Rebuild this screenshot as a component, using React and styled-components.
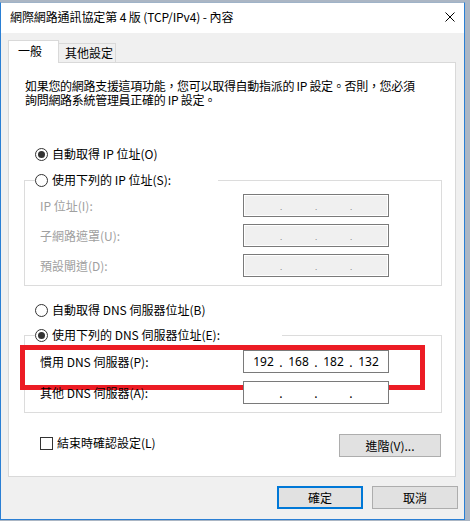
import React from "react";
import styled, { createGlobalStyle } from "styled-components";

const Global = createGlobalStyle`
  html, body { margin: 0; padding: 0; }
  body {
    background: #abb6c4;
    width: 470px;
    height: 521px;
    overflow: hidden;
    font-family: "Noto Sans CJK TC", "Noto Sans", sans-serif;
    font-size: 12px;
    color: #000;
  }
  * { box-sizing: border-box; }
`;

const Window = styled.div`
  margin-top: 2px;
  width: 465px;
  height: 518px;
  border: 1px solid #2a7fd4;
  border-top-color: #9fb3c8;
  background: #f0f0f0;
  display: flex;
  flex-direction: column;
`;

const TitleBar = styled.div`
  height: 30px;
  background: #fff;
  display: flex;
  align-items: center;
  justify-content: space-between;
  padding: 0 9px 2px 9px;
`;

const Title = styled.div`
  font-size: 12px;
  line-height: 14px;
  white-space: nowrap;
  letter-spacing: -0.1px;
`;

const CloseIcon = styled.svg`
  width: 10px;
  height: 10px;
`;

const Body = styled.div`
  flex: 1;
  display: flex;
  flex-direction: column;
  padding: 7px 6px 9px 7px;
`;

const TabRow = styled.div`
  display: flex;
  align-items: flex-end;
  height: 22px;
  position: relative;
  z-index: 1;
`;

const Tab = styled.div`
  height: ${(p) => (p.$active ? "23px" : "19px")};
  margin-bottom: ${(p) => (p.$active ? "-1px" : "0")};
  padding: ${(p) => (p.$active ? "0 9px 2px 9px" : "0 6px 1px 6px")};
  width: ${(p) => p.$w}px;
  background: ${(p) => (p.$active ? "#fff" : "#f0f0f0")};
  border: 1px solid #d9d9d9;
  border-bottom: none;
  border-left: ${(p) => (p.$active ? "1px solid #d9d9d9" : "none")};
  display: flex;
  align-items: center;
  line-height: 14px;
  white-space: nowrap;
`;

const Panel = styled.div`
  width: 448px;
  height: 415px;
  background: #fff;
  border: 1px solid #d9d9d9;
  display: flex;
  flex-direction: column;
  padding: 16px 14px 0 15px;
`;

const Desc = styled.p`
  margin: 0 0 0 1px;
  line-height: 14px;
  white-space: nowrap;
  letter-spacing: -0.3px;
`;

const RadioRow = styled.label`
  display: flex;
  align-items: center;
  height: 16px;
  margin-top: ${(p) => p.$mt || 0}px;
  margin-left: ${(p) => (p.$ml === undefined ? 11 : p.$ml)}px;
  gap: 4px;
  line-height: 14px;
  white-space: nowrap;
  background: #fff;
`;

const RadioCircle = styled.span`
  width: 13px;
  height: 13px;
  border-radius: 50%;
  border: 1px solid #333;
  display: flex;
  align-items: center;
  justify-content: center;
  flex: none;
  &::after {
    content: "";
    width: 7px;
    height: 7px;
    border-radius: 50%;
    background: ${(p) => (p.$checked ? "#333" : "transparent")};
  }
`;

const Group = styled.fieldset`
  margin: ${(p) => p.$mt}px 0 0 0;
  width: 418px;
  padding: 0 0 ${(p) => p.$pb}px 15px;
  border: 1px solid #dcdcdc;
  min-width: 0;
`;

const Legend = styled.legend`
  padding: 0;
  margin-left: -5px;
  width: ${(p) => p.$w}px;
  height: 16px;
  background: #fff;
`;

const FieldRows = styled.div`
  display: flex;
  flex-direction: column;
  gap: ${(p) => p.$gap}px;
  padding-top: ${(p) => p.$pt}px;
`;

const FieldRow = styled.div`
  display: grid;
  grid-template-columns: 203px 146px;
  align-items: center;
  height: 23px;
  position: relative;
  ${(p) =>
    p.$highlight &&
    `
    &::after {
      content: "";
      position: absolute;
      left: -20px;
      top: -5px;
      width: 395px;
      height: 35px;
      border: 5px solid #ec1c24;
      pointer-events: none;
    }
  `}
`;

const FieldLabel = styled.span`
  color: ${(p) => (p.$disabled ? "#a0a0a0" : "#000")};
  line-height: 14px;
  white-space: nowrap;
`;

const IpBox = styled.div`
  height: 23px;
  border: 1px solid #7a7a7a;
  background: ${(p) => (p.$disabled ? "#f0f0f0" : "#fff")};
  box-shadow: ${(p) => (p.$disabled ? "inset 0 0 0 1px #fff" : "none")};
  display: grid;
  grid-template-columns: 29px 6px 29px 6px 29px 6px 29px;
  align-items: center;
  padding-left: 5px;
  color: ${(p) => (p.$disabled ? "#8a8a8a" : "#000")};
`;

const Octet = styled.span`
  text-align: center;
  line-height: 14px;
  font-family: "Noto Sans", "Noto Sans CJK TC", sans-serif;
  font-size: 12px;
`;

const Dot = styled.span`
  text-align: center;
  line-height: 14px;
  font-size: ${(p) => (p.$small ? "8px" : "12px")};
  padding-top: ${(p) => (p.$small ? "3px" : "0")};
`;

const BottomRow = styled.div`
  display: flex;
  justify-content: space-between;
  align-items: flex-start;
  margin-top: 21px;
`;

const CheckRow = styled.label`
  display: flex;
  align-items: center;
  gap: 4px;
  margin: 2px 0 0 16px;
  line-height: 14px;
  white-space: nowrap;
`;

const CheckBox = styled.span`
  width: 13px;
  height: 13px;
  border: 1px solid #333;
  background: #fff;
  flex: none;
`;

const Button = styled.button`
  font: inherit;
  color: #000;
  width: ${(p) => p.$w}px;
  height: 23px;
  background: #e1e1e1;
  border: ${(p) => (p.$default ? "2px solid #0078d7" : "1px solid #adadad")};
  padding: 0;
  line-height: 14px;
  display: flex;
  align-items: center;
  justify-content: center;
`;

const Footer = styled.div`
  display: flex;
  justify-content: flex-end;
  gap: 9px;
  margin-top: 9px;
`;

function IpField({ disabled, values }) {
  const v = values || ["", "", "", ""];
  return (
    <IpBox $disabled={disabled}>
      <Octet>{v[0]}</Octet>
      <Dot $small={disabled}>.</Dot>
      <Octet>{v[1]}</Octet>
      <Dot $small={disabled}>.</Dot>
      <Octet>{v[2]}</Octet>
      <Dot $small={disabled}>.</Dot>
      <Octet>{v[3]}</Octet>
    </IpBox>
  );
}

function Radio({ checked, children, mt, ml }) {
  return (
    <RadioRow $mt={mt} $ml={ml}>
      <RadioCircle $checked={checked} />
      <span>{children}</span>
    </RadioRow>
  );
}

export default function App() {
  return (
    <>
      <Global />
      <Window>
        <TitleBar>
          <Title>網際網路通訊協定第 4 版 (TCP/IPv4) - 內容</Title>
          <CloseIcon viewBox="0 0 10 10">
            <path d="M0.5 0.5 L9.5 9.5 M9.5 0.5 L0.5 9.5" stroke="#000" strokeWidth="1" fill="none" />
          </CloseIcon>
        </TitleBar>
        <Body>
          <TabRow>
            <Tab $active $w={51}>一般</Tab>
            <Tab $w={57}>其他設定</Tab>
          </TabRow>
          <Panel>
            <Desc>
              如果您的網路支援這項功能，您可以取得自動指派的 IP 設定。否則，您必須
              <br />
              詢問網路系統管理員正確的 IP 設定。
            </Desc>
            <Radio checked mt={39}>自動取得 IP 位址(O)</Radio>
            <Group $mt={10} $pb={8}>
              <Legend $w={183}>
                <Radio ml={0}>使用下列的 IP 位址(S):</Radio>
              </Legend>
              <FieldRows $gap={7} $pt={6}>
                <FieldRow>
                  <FieldLabel $disabled>IP 位址(I):</FieldLabel>
                  <IpField disabled />
                </FieldRow>
                <FieldRow>
                  <FieldLabel $disabled>子網路遮罩(U):</FieldLabel>
                  <IpField disabled />
                </FieldRow>
                <FieldRow>
                  <FieldLabel $disabled>預設閘道(D):</FieldLabel>
                  <IpField disabled />
                </FieldRow>
              </FieldRows>
            </Group>
            <Radio mt={16}>自動取得 DNS 伺服器位址(B)</Radio>
            <Group $mt={9} $pb={8}>
              <Legend $w={247}>
                <Radio checked ml={0}>使用下列的 DNS 伺服器位址(E):</Radio>
              </Legend>
              <FieldRows $gap={8} $pt={7}>
                <FieldRow $highlight>
                  <FieldLabel>慣用 DNS 伺服器(P):</FieldLabel>
                  <IpField values={["192", "168", "182", "132"]} />
                </FieldRow>
                <FieldRow>
                  <FieldLabel>其他 DNS 伺服器(A):</FieldLabel>
                  <IpField />
                </FieldRow>
              </FieldRows>
            </Group>
            <BottomRow>
              <CheckRow>
                <CheckBox />
                <span>結束時確認設定(L)</span>
              </CheckRow>
              <Button $w={102}>進階(V)...</Button>
            </BottomRow>
          </Panel>
          <Footer>
            <Button $w={86} $default>確定</Button>
            <Button $w={86}>取消</Button>
          </Footer>
        </Body>
      </Window>
    </>
  );
}
